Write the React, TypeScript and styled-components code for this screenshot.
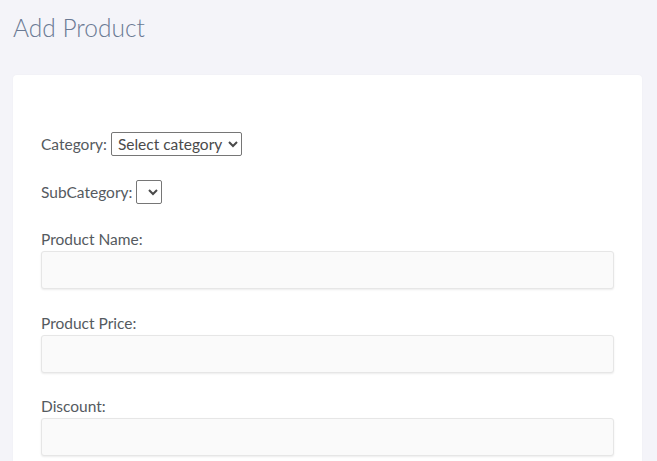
import styled, { createGlobalStyle } from "styled-components";

const GlobalStyle = createGlobalStyle`
  html, body {
    margin: 0;
    padding: 0;
    background: #f4f4f9;
    font-family: "Lato", "Open Sans", sans-serif;
  }
`;

const Page = styled.div`
  padding: 0 15px 0 13px;
`;

const Title = styled.h2`
  margin: 0;
  padding-top: 12px;
  height: 75px;
  box-sizing: border-box;
  font-size: 24.5px;
  font-weight: 300;
  line-height: 32px;
  color: #6a7a94;
`;

const Card = styled.div`
  background: #ffffff;
  border-radius: 4px;
  padding: 57px 28px 20px;
  box-shadow: 0 0 2px rgba(0, 0, 0, 0.04);
`;

const Form = styled.form`
  display: flex;
  flex-direction: column;
`;

const InlineRow = styled.div`
  display: flex;
  align-items: center;
  gap: 4px;
  margin-bottom: 24px;
  font-size: 15.5px;
  color: #555a60;
`;

const Select = styled.select<{ $minWidth?: number }>`
  font-family: "Lato", "Open Sans", sans-serif;
  font-size: 15.5px;
  color: #4a4a4a;
  height: 24px;
  padding: 0 2px;
  border: 1px solid #767676;
  border-radius: 2px;
  background: #fff;
  min-width: ${(p) => p.$minWidth ?? 0}px;
`;

const Field = styled.div`
  display: flex;
  flex-direction: column;
  margin-bottom: 22.5px;
`;

const Label = styled.label`
  font-size: 15.5px;
  line-height: 22px;
  color: #555a60;
  margin-bottom: 1px;
`;

const Input = styled.input`
  height: 38px;
  box-sizing: border-box;
  border: 1px solid #e6e6e6;
  border-radius: 3px;
  background: #fafafa;
  box-shadow: 0 1px 2px rgba(0, 0, 0, 0.08);
  padding: 0 10px;
  font-size: 15px;
  outline: none;
`;

export default function App() {
  return (
    <>
      <GlobalStyle />
      <Page>
        <Title>Add Product</Title>
        <Card>
          <Form>
            <InlineRow>
              <span>Category:</span>
              <Select>
                <option>Select category</option>
              </Select>
            </InlineRow>
            <InlineRow>
              <span>SubCategory:</span>
              <Select $minWidth={25}></Select>
            </InlineRow>
            <Field>
              <Label htmlFor="name">Product Name:</Label>
              <Input id="name" type="text" />
            </Field>
            <Field>
              <Label htmlFor="price">Product Price:</Label>
              <Input id="price" type="text" />
            </Field>
            <Field>
              <Label htmlFor="discount">Discount:</Label>
              <Input id="discount" type="text" />
            </Field>
          </Form>
        </Card>
      </Page>
    </>
  );
}
